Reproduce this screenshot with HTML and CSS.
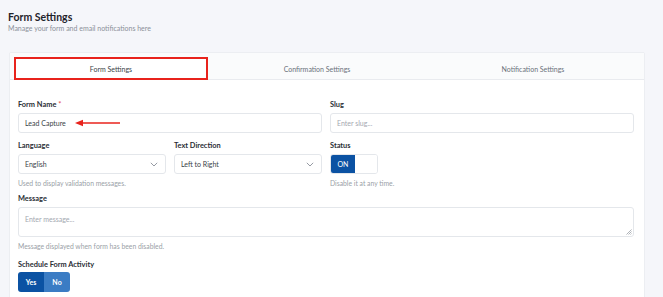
FILE: index.html
```html
<!DOCTYPE html>
<html>
<head>
<meta charset="utf-8">
<link rel="stylesheet" href="styles.css">
</head>
<body>
<header class="page-head">
  <h1 class="title">Form Settings</h1>
  <p class="subtitle">Manage your form and email notifications here</p>
</header>
<section class="card">
  <nav class="tabs">
    <div class="tab tab-active">Form Settings</div>
    <div class="tab">Confirmation Settings</div>
    <div class="tab">Notification Settings</div>
  </nav>
  <div class="form">
    <div class="row two">
      <div class="field">
        <label class="label">Form Name <span class="req">*</span></label>
        <div class="input has-arrow">Lead Capture
          <svg class="arrow" width="46" height="8" viewBox="0 0 46 8"><path d="M6 4H45" stroke="#e8231c" stroke-width="1.6"/><path d="M0 4L8 0.8V7.2Z" fill="#e8231c"/></svg>
        </div>
      </div>
      <div class="field">
        <label class="label">Slug</label>
        <div class="input placeholder">Enter slug...</div>
      </div>
    </div>
    <div class="row two">
      <div class="field">
        <div class="row two inner">
          <div>
            <label class="label">Language</label>
            <div class="input select">English <svg class="chev" width="8" height="5" viewBox="0 0 8 5"><path d="M0.8 0.8L4 4L7.2 0.8" fill="none" stroke="#8a8f98" stroke-width="0.9"/></svg></div>
          </div>
          <div>
            <label class="label">Text Direction</label>
            <div class="input select">Left to Right <svg class="chev" width="8" height="5" viewBox="0 0 8 5"><path d="M0.8 0.8L4 4L7.2 0.8" fill="none" stroke="#8a8f98" stroke-width="0.9"/></svg></div>
          </div>
        </div>
        <p class="help">Used to display validation messages.</p>
      </div>
      <div class="field">
        <label class="label">Status</label>
        <div class="toggle"><span class="on">ON</span><span class="off"></span></div>
        <p class="help">Disable it at any time.</p>
      </div>
    </div>
    <div class="field msg">
      <label class="label">Message</label>
      <div class="input textarea placeholder">Enter message...
        <svg class="grip" width="6" height="6" viewBox="0 0 6 6"><path d="M5.5 0.5L0.5 5.5M5.5 2.5L2.5 5.5M5.5 4.5L4.5 5.5" stroke="#9aa0a6" stroke-width="0.8"/></svg>
      </div>
      <p class="help">Message displayed when form has been disabled.</p>
    </div>
    <div class="field sched">
      <label class="label">Schedule Form Activity</label>
      <div class="yesno"><span class="yes">Yes</span><span class="no">No</span></div>
    </div>
  </div>
</section>
</body>
</html>
```
FILE: styles.css
```css
* { box-sizing: border-box; }
html, body { margin: 0; padding: 0; }
body {
  background: #f5f6fa;
  font-family: "Lato", "Open Sans", sans-serif;
  color: #2b2f36;
  width: 663px;
  height: 297px;
  overflow: hidden;
}
.page-head { padding: 11px 8px 0; height: 52px; }
.title { margin: 0; font-size: 10.5px; line-height: 13px; font-weight: 700; color: #1f232a; }
.subtitle { margin: 0; font-size: 7px; line-height: 9px; color: #8b9099; }
.card {
  margin-left: 9px;
  width: 636px;
  height: 260px;
  background: #fff;
  border: 1px solid #eceef2;
  border-radius: 2px;
}
.tabs {
  display: grid;
  grid-template-columns: 194px 218px 1fr;
  padding: 4px 4px 0 4px;
  height: 27px;
  background: #fafbfc;
  border-bottom: 1px solid #e9ebef;
}
.tab {
  display: flex; align-items: center; justify-content: center;
  font-size: 7px; color: #6b717b;
  height: 23px;
}
.tab-active {
  background: #fff;
  border: 2px solid #e8231c;
  color: #3a3f47;
}
.form { padding: 19px 10px 0 8px; }
.row.two { display: grid; grid-template-columns: 1fr 1fr; column-gap: 8px; }
.row.inner { column-gap: 8px; }
.label { display: block; font-size: 7.4px; line-height: 11px; font-weight: 700; color: #2a2e35; margin-bottom: 3px; }
.req { color: #e5484d; font-weight: 400; }
.input {
  position: relative;
  height: 20px;
  border: 1px solid #e4e7eb;
  border-radius: 3px;
  padding: 0 6px;
  display: flex; align-items: center;
  font-size: 7px; color: #3a3f47;
  background: #fff;
}
.placeholder { color: #a3a8b0; }
.arrow { position: absolute; left: 56px; top: 5px; }
.select { justify-content: space-between; padding-right: 7px; }
.row.two + .row.two { margin-top: 7px; }
.help { margin: 4px 0 0; font-size: 6.8px; line-height: 11px; color: #9a9fa7; }
.toggle { display: flex; width: 48px; height: 20px; border: 1px solid #e4e7eb; border-radius: 3px; overflow: hidden; }
.toggle .on { width: 24px; background: #0b52a3; color: #fff; font-size: 7px; display: flex; align-items: center; justify-content: center; }
.toggle .off { flex: 1; background: #fff; }
.msg { margin-top: 4px; }
.textarea { height: 30px; align-items: flex-start; padding-top: 7px; }
.grip { position: absolute; right: 1px; bottom: 1px; }
.sched { margin-top: 7px; }
.yesno { display: flex; width: 52px; height: 20px; border-radius: 3px; overflow: hidden; margin-top: -1px; }
.yesno span { flex: 1; display: flex; align-items: center; justify-content: center; color: #fff; font-size: 7px; font-weight: 700; }
.yes { background: #0b52a3; }
.no { background: #3b7cc4; }
```
